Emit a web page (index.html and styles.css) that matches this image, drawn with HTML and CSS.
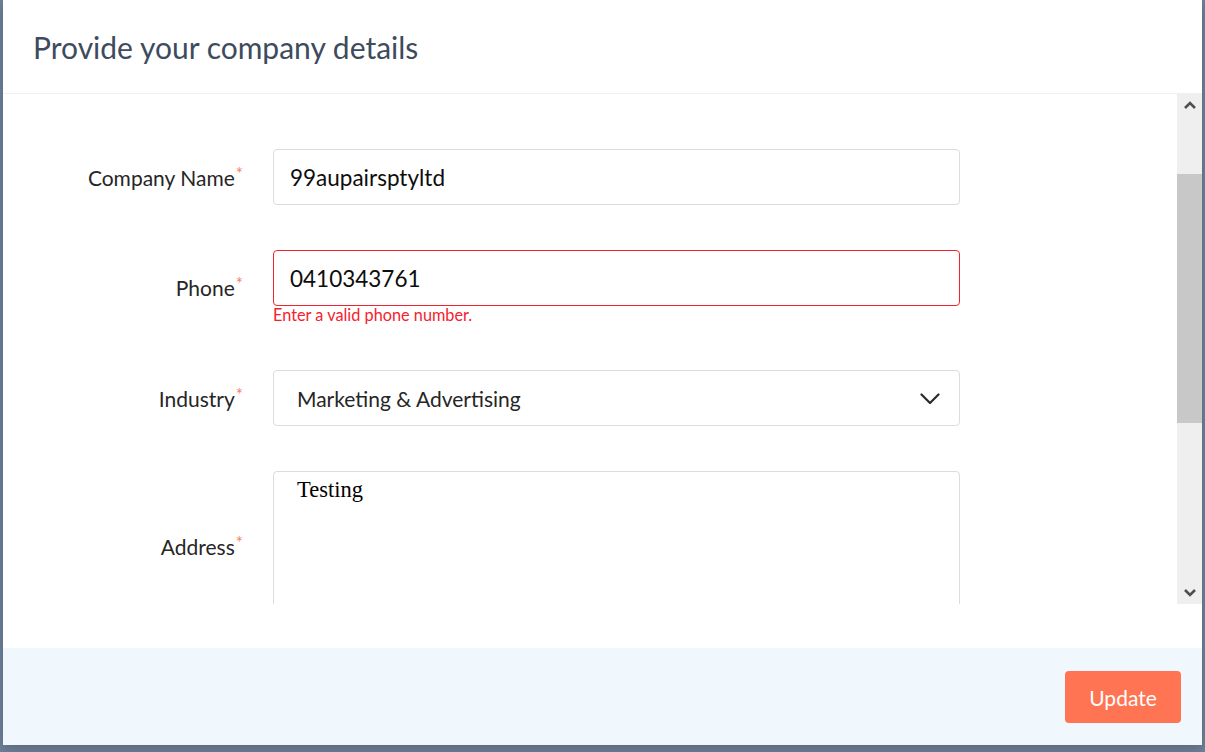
FILE: index.html
```html
<!DOCTYPE html>
<html lang="en">
<head>
<meta charset="utf-8">
<title>Provide your company details</title>
<link rel="stylesheet" href="styles.css">
</head>
<body>
<div class="modal">
  <div class="modal-header">
    <h1 class="modal-title">Provide your company details</h1>
  </div>
  <div class="modal-body">
    <div class="scroll-area">
      <form class="form">
        <div class="form-row">
          <label class="form-label">Company Name<span class="req">*</span></label>
          <div class="field">
            <div class="input">99aupairsptyltd</div>
          </div>
        </div>
        <div class="form-row">
          <label class="form-label">Phone<span class="req">*</span></label>
          <div class="field">
            <div class="input input-error">0410343761</div>
            <div class="error-text">Enter a valid phone number.</div>
          </div>
        </div>
        <div class="form-row">
          <label class="form-label">Industry<span class="req">*</span></label>
          <div class="field">
            <div class="select">
              <span>Marketing &amp; Advertising</span>
              <svg class="chev" width="20" height="12" viewBox="0 0 20 12"><path d="M1.5 1.5 L10 10 L18.5 1.5" fill="none" stroke="#2b2b2b" stroke-width="2.2" stroke-linecap="round" stroke-linejoin="round"/></svg>
            </div>
          </div>
        </div>
        <div class="form-row">
          <label class="form-label">Address<span class="req">*</span></label>
          <div class="field">
            <div class="textarea">Testing</div>
          </div>
        </div>
      </form>
    </div>
    <div class="scrollbar">
      <div class="sb-btn">
        <svg width="12" height="8" viewBox="0 0 12 8"><path d="M1 7 L6 2 L11 7" fill="none" stroke="#4f4f4f" stroke-width="2.6"/></svg>
      </div>
      <div class="sb-track">
        <div class="sb-thumb"></div>
      </div>
      <div class="sb-btn">
        <svg width="12" height="8" viewBox="0 0 12 8"><path d="M1 1 L6 6 L11 1" fill="none" stroke="#4f4f4f" stroke-width="2.6"/></svg>
      </div>
    </div>
  </div>
  <div class="modal-gap"></div>
  <div class="modal-footer">
    <button class="btn-update" type="button">Update</button>
  </div>
</div>
</body>
</html>
```

FILE: styles.css
```css
html, body {
  margin: 0;
  padding: 0;
}
body {
  width: 1205px;
  height: 752px;
  overflow: hidden;
  background: #6f8298;
  font-family: Lato, "Open Sans", sans-serif;
}
.modal {
  margin-left: 3px;
  width: 1199px;
  height: 745px;
  background: #ffffff;
  display: flex;
  flex-direction: column;
  box-shadow: 0 4px 12px rgba(40, 55, 75, 0.35);
}
.modal-header {
  height: 93px;
  border-bottom: 1px solid #f0f0f0;
  display: flex;
  align-items: center;
  padding-left: 30px;
  flex-shrink: 0;
}
.modal-title {
  margin: 0;
  font-size: 30px;
  font-weight: 400;
  color: #3d4b5e;
}
.modal-body {
  height: 510px;
  display: flex;
  flex-shrink: 0;
}
.scroll-area {
  flex: 1;
  overflow: hidden;
}
.form {
  padding-top: 55px;
  display: flex;
  flex-direction: column;
  gap: 45px;
}
.form-row {
  display: grid;
  grid-template-columns: 240px 687px;
  column-gap: 30px;
  align-items: center;
}
.form-label {
  text-align: right;
  font-size: 21px;
  color: #262626;
  white-space: nowrap;
}
.req {
  color: #f3836a;
  font-size: 17px;
  vertical-align: top;
  position: relative;
  top: -2px;
  margin-left: 1px;
}
.field {
  display: flex;
  flex-direction: column;
}
.input {
  box-sizing: border-box;
  height: 56px;
  border: 1px solid #dcdcdc;
  border-radius: 4px;
  padding-left: 16px;
  display: flex;
  align-items: center;
  font-size: 22.5px;
  color: #0d0d0d;
}
.input-error {
  border-color: #f5222d;
}
.error-text {
  height: 19px;
  font-size: 16.3px;
  line-height: 19px;
  color: #f5222d;
  margin-top: -1px;
  margin-bottom: 1px;
}
.select {
  box-sizing: border-box;
  height: 56px;
  border: 1px solid #dcdcdc;
  border-radius: 4px;
  padding: 0 19px 0 23px;
  display: flex;
  align-items: center;
  justify-content: space-between;
  font-size: 21px;
  color: #262626;
}
.chev {
  margin-top: 1px;
}
.textarea {
  box-sizing: border-box;
  height: 150px;
  border: 1px solid #dcdcdc;
  border-radius: 4px;
  padding: 5px 23px;
  font-family: "Liberation Serif", "Times New Roman", serif;
  font-size: 22.5px;
  color: #000;
}
.scrollbar {
  width: 25px;
  background: #efefef;
  display: flex;
  flex-direction: column;
  flex-shrink: 0;
}
.sb-btn {
  height: 22px;
  display: flex;
  align-items: center;
  justify-content: center;
}
.sb-track {
  flex: 1;
  padding-top: 58px;
}
.sb-thumb {
  height: 249px;
  background: #c8c8c8;
}
.modal-gap {
  height: 44px;
  flex-shrink: 0;
}
.modal-footer {
  flex: 1;
  background: #f0f8fe;
  display: flex;
  justify-content: flex-end;
  align-items: flex-start;
  padding: 23px 21px 0 0;
}
.btn-update {
  width: 116px;
  height: 52px;
  border: none;
  border-radius: 4px;
  background: #ff7452;
  color: #ffffff;
  font-family: Lato, "Open Sans", sans-serif;
  font-size: 21px;
  padding: 0;
}
```
